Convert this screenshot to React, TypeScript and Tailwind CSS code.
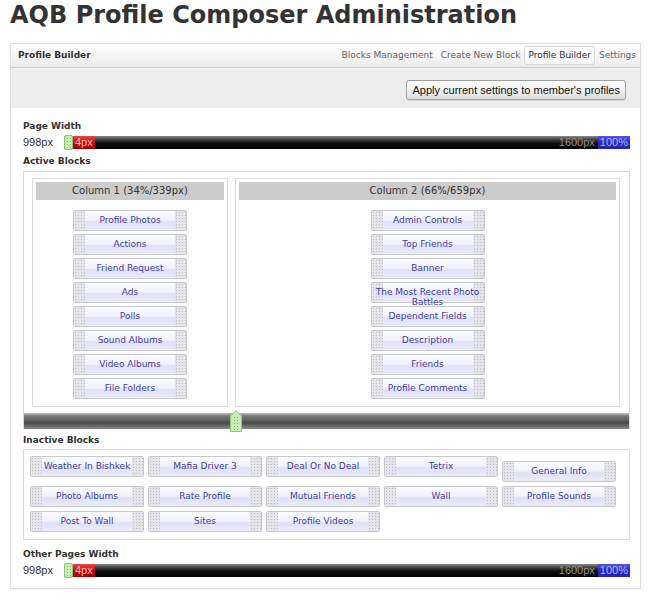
import React from 'react'

const column1 = [
  'Profile Photos',
  'Actions',
  'Friend Request',
  'Ads',
  'Polls',
  'Sound Albums',
  'Video Albums',
  'File Folders',
]

const column2 = [
  'Admin Controls',
  'Top Friends',
  'Banner',
  'The Most Recent Photo Battles',
  'Dependent Fields',
  'Description',
  'Friends',
  'Profile Comments',
]

const inactive = [
  'Weather In Bishkek',
  'Mafia Driver 3',
  'Deal Or No Deal',
  'Tetrix',
  'General Info',
  'Photo Albums',
  'Rate Profile',
  'Mutual Friends',
  'Wall',
  'Profile Sounds',
  'Post To Wall',
  'Sites',
  'Profile Videos',
]

const tabs = ['Blocks Management', 'Create New Block', 'Profile Builder', 'Settings']

function Block({ title, className = '' }: { title: string; className?: string }) {
  return (
    <div
      className={`relative h-[21px] w-[114px] shrink-0 rounded-[2px] border border-[#c8c8d0] bg-[linear-gradient(#fbfbff,#f2f2fd_45%,#e0e0f7_58%,#ececfb)] ${className}`}
    >
      {/* drag grips */}
      <span className="absolute left-0 top-0 h-full w-[11px] bg-[#e4e4ea] bg-[radial-gradient(#bcbcc6_0.8px,transparent_1px)] bg-[length:3px_3px]" />
      <span className="absolute right-0 top-0 h-full w-[11px] bg-[#e4e4ea] bg-[radial-gradient(#bcbcc6_0.8px,transparent_1px)] bg-[length:3px_3px]" />
      <div className="relative px-[1px] pt-[4px] text-center text-[9px] leading-[10px] text-[#4040a8]">
        {title}
      </div>
    </div>
  )
}

function Grip() {
  return (
    <div className="h-[15px] w-[9px] shrink-0 rounded-[2px] border border-[#8cc477] bg-[#c9ecb3] bg-[radial-gradient(#7fb86a_0.7px,transparent_1px)] bg-[length:3px_3px] bg-[position:1px_1px]" />
  )
}

function WidthSlider() {
  return (
    <div className="flex h-[16px] items-center">
      <span className="w-[41px] font-['Liberation_Sans',sans-serif] text-[11px] text-[#333]">998px</span>
      <div className="flex h-[13px] flex-1 items-center bg-[linear-gradient(#8a8a8a,#3a3a3a_30%,#111_55%,#000)] font-['Liberation_Sans',sans-serif] text-[11px] leading-[13px]">
        <Grip />
        <span className="h-full bg-[linear-gradient(#e64848,#c01010_50%,#a00000)] px-[2px] text-[#ffb8b8]">4px</span>
        <span className="flex-1" />
        <span className="pr-[3px] text-[#909090]">1600px</span>
        <span className="h-full bg-[linear-gradient(#5454e0,#2c2cc4_50%,#2424ac)] px-[2px] text-[#b0b0ff]">100%</span>
      </div>
    </div>
  )
}

function Label({ children, className = '' }: { children: React.ReactNode; className?: string }) {
  return <div className={`text-[9px] font-bold leading-[12px] text-[#333] ${className}`}>{children}</div>
}

function Column({ title, blocks, className = '' }: { title: string; blocks: string[]; className?: string }) {
  return (
    <div className={`border border-[#dcdcdc] p-[3px] ${className}`}>
      <div className="h-[18px] bg-[#cccccc] text-center text-[10px] leading-[18px] text-[#333]">{title}</div>
      <div className="flex flex-col items-center gap-[3px] pb-[4px] pt-[10px]">
        {blocks.map((b) => (
          <Block key={b} title={b} />
        ))}
      </div>
    </div>
  )
}

export default function App() {
  return (
    <div className="min-h-screen bg-white font-['DejaVu_Sans',sans-serif] text-[#333]">
      <h1 className="px-[10px] text-[24px] font-bold leading-[30px] text-[#333]">
        AQB Profile Composer Administration
      </h1>

      <div className="ml-[10px] mt-[13px] w-[631px] border border-[#dddddd] shadow-[0_1px_2px_rgba(0,0,0,0.06)]">
        {/* header */}
        <div className="flex h-[24px] items-center justify-between border-b border-[#cfcfcf] bg-[linear-gradient(#ffffff,#f4f4f4_60%,#ececec)] pl-[7px]">
          <span className="text-[9px] font-bold text-[#333]">Profile Builder</span>
          <div className="flex items-center text-[9px] text-[#666]">
            {tabs.map((t) =>
              t === 'Profile Builder' ? (
                <span
                  key={t}
                  className="rounded-[3px] border border-[#d6d6d6] bg-[linear-gradient(#ffffff,#f6f6f6)] px-[3px] leading-[17px] text-[#333]"
                >
                  {t}
                </span>
              ) : (
                <span key={t} className="px-[4px] leading-[17px]">
                  {t}
                </span>
              ),
            )}
          </div>
        </div>

        {/* toolbar */}
        <div className="flex h-[40px] justify-end bg-[#ededed] pr-[14px] pt-[12px]">
          <button className="h-[20px] rounded-[3px] border border-[#a0a0a0] bg-[linear-gradient(#ffffff,#f2f2f2_50%,#dedede)] px-[5px] font-['Liberation_Sans',sans-serif] text-[11px] leading-[18px] text-[#111] shadow-[0_1px_0_rgba(0,0,0,0.08)]">
            Apply current settings to member&apos;s profiles
          </button>
        </div>

        <div className="pb-[10px] pl-[12px] pr-[10px]">
          <Label className="mt-[12px]">Page Width</Label>
          <div className="mt-[2px]">
            <WidthSlider />
          </div>

          <Label className="mt-[5px]">Active Blocks</Label>
          <div className="mt-[4px] border-x border-t border-[#dcdcdc]">
            <div className="flex gap-[7px] pb-[6px] pl-[8px] pr-[9px] pt-[6px]">
              <Column title="Column 1 (34%/339px)" blocks={column1} className="w-[196px]" />
              <Column title="Column 2 (66%/659px)" blocks={column2} className="flex-1" />
            </div>
            <div className="relative h-[16px] bg-[linear-gradient(#c4c4c4,#7c7c7c_18%,#5a5a5a_50%,#484848_62%,#8a8a8a)]">
              <svg className="absolute left-[206px] top-[-3px]" width="12" height="22" viewBox="0 0 12 22">
                <polygon points="0.5,6 6,0.7 11.5,6 11.5,21.5 0.5,21.5" fill="#c9ecb3" stroke="#8cc477" />
                {[7, 10, 13, 16, 19].map((y) => (
                  <g key={y} fill="#7fb86a">
                    <rect x="4" y={y} width="1" height="1" />
                    <rect x="7" y={y} width="1" height="1" />
                  </g>
                ))}
              </svg>
            </div>
          </div>

          <Label className="mt-[5px]">Inactive Blocks</Label>
          <div className="mt-[3px] flex flex-wrap items-start gap-x-[4px] gap-y-[4px] border border-[#dcdcdc] px-[6px] pb-[7px] pt-[6px]">
            {inactive.map((b) => (
              <Block key={b} title={b} className={b === 'General Info' ? 'mt-[5px]' : ''} />
            ))}
          </div>

          <Label className="mt-[8px]">Other Pages Width</Label>
          <div className="mt-[2px]">
            <WidthSlider />
          </div>
        </div>
      </div>
    </div>
  )
}
